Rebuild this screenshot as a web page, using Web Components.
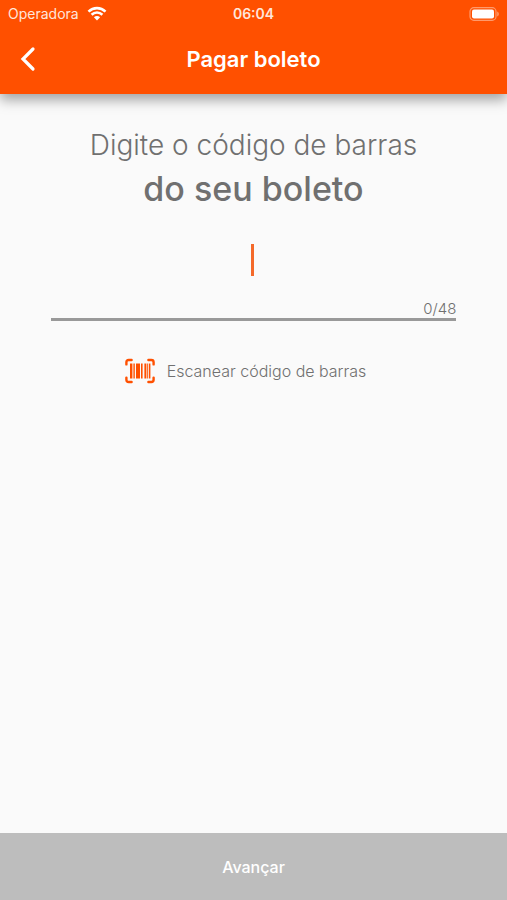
<!DOCTYPE html>
<html lang="pt-BR">
<head>
<meta charset="UTF-8">
<meta name="viewport" content="width=device-width, initial-scale=1.0">
<title>Pagar boleto</title>
<style>
    body {
        margin: 0;
        font-family: Inter, "Liberation Sans", sans-serif;
        color: #707070;
        background: #fafafa;
    }
</style>
</head>
<body>

<boleto-page>
    <status-bar slot="header" carrier="Operadora" time="06:04"></status-bar>
    <nav-bar slot="header">Pagar boleto</nav-bar>
    <page-title>
        Digite o código de barras
        <span slot="strong">do seu boleto</span>
    </page-title>
    <barcode-field maxlength="48"></barcode-field>
    <scan-button>Escanear código de barras</scan-button>
    <footer-button slot="footer">Avançar</footer-button>
</boleto-page>

<script>
(function () {
    function template(html) {
        const tmpl = document.createElement('template');
        tmpl.innerHTML = html;
        return tmpl;
    }

    class BaseElement extends HTMLElement {
        constructor() {
            super();
            this.attachShadow({ mode: 'open' });
            this.shadowRoot.appendChild(this.constructor.tmpl.content.cloneNode(true));
        }
    }

    class BoletoPage extends BaseElement {
        static tmpl = template(`
            <style>
                :host {
                    display: flex;
                    flex-direction: column;
                    min-height: 100vh;
                }
                header {
                    padding-bottom: 3px;
                    color: #fff;
                    background: #ff5000;
                    box-shadow: 0 6px 12px rgba(0, 0, 0, 0.35);
                }
                main {
                    flex: 1;
                    padding: 29px 10% 0;
                }
            </style>
            <header><slot name="header"></slot></header>
            <main><slot></slot></main>
            <footer><slot name="footer"></slot></footer>
        `);
    }

    class StatusBar extends BaseElement {
        static tmpl = template(`
            <style>
                :host {
                    display: grid;
                    grid-template-columns: 1fr auto 1fr;
                    align-items: center;
                    height: 27px;
                    padding: 0 8px;
                    font-size: 14px;
                    color: #ffe6da;
                }
                .left {
                    display: flex;
                    align-items: center;
                    gap: 8px;
                }
                .time {
                    font-weight: 600;
                }
                .battery {
                    justify-self: end;
                }
                svg {
                    display: block;
                }
            </style>
            <span class="left">
                <span class="carrier"></span>
                <svg width="20" height="15" viewBox="0 0 20 15" fill="none" stroke="#fff" stroke-width="2.6" aria-hidden="true">
                    <path d="M1.5 5.6C6.3.9 13.7.9 18.5 5.6"/>
                    <path d="M4.6 8.8C7.7 5.8 12.3 5.8 15.4 8.8"/>
                    <path d="M10 14.5L6.9 11.3C8.7 9.7 11.3 9.7 13.1 11.3Z" fill="#fff" stroke="none"/>
                </svg>
            </span>
            <span class="time"></span>
            <svg class="battery" width="30" height="14" viewBox="0 0 30 14" aria-hidden="true">
                <rect x="1" y=".7" width="26" height="12.6" rx="3.8" fill="none" stroke="#ff9a6b" stroke-width="1.2"/>
                <rect x="3" y="2.5" width="22" height="9" rx="2" fill="#fff"/>
                <path d="M28.2 4.6C30.4 5.4 30.4 8.6 28.2 9.4Z" fill="#ff9a6b"/>
            </svg>
        `);

        connectedCallback() {
            this.shadowRoot.querySelector('.carrier').textContent = this.getAttribute('carrier');
            this.shadowRoot.querySelector('.time').textContent = this.getAttribute('time');
        }
    }

    class NavBar extends BaseElement {
        static tmpl = template(`
            <style>
                :host {
                    display: grid;
                    grid-template-columns: 56px 1fr 56px;
                    align-items: center;
                    height: 64px;
                }
                button {
                    display: grid;
                    place-items: center;
                    height: 48px;
                    padding: 0;
                    border: 0;
                    color: inherit;
                    background: none;
                    cursor: pointer;
                }
                h1 {
                    margin: 0;
                    font-size: 22px;
                    font-weight: 600;
                    text-align: center;
                }
            </style>
            <button type="button" aria-label="Voltar">
                <svg width="16" height="26" viewBox="0 0 16 26" fill="none" stroke="#fff" stroke-width="3.2" stroke-linecap="round" aria-hidden="true">
                    <path d="M13 3L3 13L13 23"/>
                </svg>
            </button>
            <h1><slot></slot></h1>
        `);
    }

    class PageTitle extends BaseElement {
        static tmpl = template(`
            <style>
                :host {
                    display: block;
                    text-align: center;
                }
                h2 {
                    margin: 0;
                    font-size: 28px;
                    font-weight: 300;
                    line-height: 44px;
                }
                strong {
                    display: block;
                    font-size: 34px;
                    font-weight: 500;
                }
            </style>
            <h2><slot></slot><strong><slot name="strong"></slot></strong></h2>
        `);
    }

    class BarcodeField extends BaseElement {
        static tmpl = template(`
            <style>
                :host {
                    display: block;
                    margin-top: 27px;
                }
                .field {
                    position: relative;
                    border-bottom: 3px solid #999;
                }
                input {
                    display: block;
                    box-sizing: border-box;
                    width: 100%;
                    height: 44px;
                    padding: 0;
                    border: 0;
                    outline: 0;
                    font: inherit;
                    font-size: 24px;
                    text-align: center;
                    color: inherit;
                    background: none;
                    caret-color: #ff5000;
                }
                /* large caret shown while the field is empty */
                .caret {
                    position: absolute;
                    top: 6px;
                    left: calc(50% - 3px);
                    width: 3px;
                    height: 32px;
                    background: #f4692a;
                    pointer-events: none;
                }
                input:not(:placeholder-shown) + .caret {
                    display: none;
                }
                output {
                    display: block;
                    padding-top: 18px;
                    font-size: 15px;
                    font-weight: 300;
                    line-height: 18px;
                    text-align: right;
                }
            </style>
            <div class="field">
                <input id="code" type="text" inputmode="numeric" placeholder=" " aria-label="Código de barras">
                <span class="caret"></span>
                <output for="code"></output>
            </div>
        `);

        connectedCallback() {
            this.input = this.shadowRoot.querySelector('input');
            this.input.maxLength = Number(this.getAttribute('maxlength'));
            this.input.addEventListener('input', () => this.updateCount());
            this.updateCount();
        }

        updateCount() {
            const output = this.shadowRoot.querySelector('output');
            output.textContent = this.input.value.length + '/' + this.input.maxLength;
        }
    }

    class ScanButton extends BaseElement {
        static tmpl = template(`
            <style>
                :host {
                    display: flex;
                    justify-content: center;
                    margin-top: 30px;
                }
                button {
                    display: flex;
                    align-items: center;
                    gap: 12px;
                    height: 40px;
                    padding: 0 16px 0 0;
                    border: 0;
                    font: inherit;
                    font-size: 16px;
                    font-weight: 300;
                    color: inherit;
                    background: none;
                    cursor: pointer;
                }
            </style>
            <button type="button">
                <svg width="30" height="26" viewBox="0 0 30 26" aria-hidden="true">
                    <path fill="none" stroke="#ff5000" stroke-width="2.4" stroke-linecap="round" d="M1.4 6.4V4.2Q1.4 2 3.6 2H6.6M23.4 2H26.4Q28.6 2 28.6 4.2V6.4M28.6 19.6V21.8Q28.6 24 26.4 24H23.4M6.600 24H3.6Q1.4 24 1.4 21.8V19.6"/>
                    <g fill="#ff5000">
                        <rect x="5" y="5.5" width="2.400" height="15"/>
                        <rect x="8.4" y="5.5" width="1.400" height="15"/>
                        <rect x="11" y="5.5" width="4" height="15"/>
                        <rect x="16" y="5.5" width="1.600" height="15"/>
                        <rect x="19.4" y="5.5" width="2" height="15"/>
                        <rect x="22.2" y="5.5" width="1" height="15"/>
                        <rect x="24" y="5.5" width="1.400" height="15"/>
                    </g>
                </svg>
                <span><slot></slot></span>
            </button>
        `);
    }

    class FooterButton extends BaseElement {
        static tmpl = template(`
            <style>
                :host {
                    display: block;
                }
                button {
                    display: block;
                    width: 100%;
                    height: 67px;
                    padding: 0;
                    border: 0;
                    font: inherit;
                    font-size: 16px;
                    font-weight: 500;
                    color: #fff;
                    background: #bdbdbd;
                }
            </style>
            <button type="button"><slot></slot></button>
        `);
    }

    customElements.define('boleto-page', BoletoPage);
    customElements.define('status-bar', StatusBar);
    customElements.define('nav-bar', NavBar);
    customElements.define('page-title', PageTitle);
    customElements.define('barcode-field', BarcodeField);
    customElements.define('scan-button', ScanButton);
    customElements.define('footer-button', FooterButton);
})();
</script>
</body>
</html>
